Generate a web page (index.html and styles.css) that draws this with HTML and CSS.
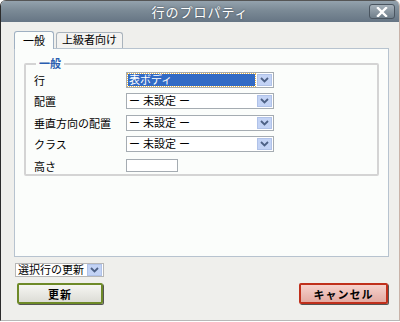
FILE: index.html
```html
<!DOCTYPE html>
<html lang="ja">
<head>
    <meta charset="UTF-8">
    <title>行のプロパティ</title>
    <link rel="stylesheet" href="styles.css">
</head>
<body>
    <div class="dialog">
        <div class="titlebar">
            <span class="title">行のプロパティ</span>
            <span class="close">
                <svg width="12" height="10" viewBox="0 0 12 10"><path d="M2 1 L10 9 M10 1 L2 9" stroke="#fff" stroke-width="2.4" stroke-linecap="square"/></svg>
            </span>
        </div>

        <div class="body">
            <div class="tabs">
                <span class="tab active">一般</span>
                <span class="tab">上級者向け</span>
            </div>

            <div class="panel">
                <fieldset class="group">
                    <legend>一般</legend>

                    <div class="row">
                        <label>行</label>
                        <div class="select focus">
                            <span class="value"><span class="hl">表ボディ</span></span>
                            <span class="arrow"><svg width="9" height="6" viewBox="0 0 9 6"><path d="M1 1 L4.5 4.5 L8 1" fill="none" stroke="#4d6185" stroke-width="1.8"/></svg></span>
                        </div>
                    </div>
                    <div class="row">
                        <label>配置</label>
                        <div class="select">
                            <span class="value">ー 未設定 ー</span>
                            <span class="arrow"><svg width="9" height="6" viewBox="0 0 9 6"><path d="M1 1 L4.5 4.5 L8 1" fill="none" stroke="#4d6185" stroke-width="1.8"/></svg></span>
                        </div>
                    </div>
                    <div class="row">
                        <label>垂直方向の配置</label>
                        <div class="select">
                            <span class="value">ー 未設定 ー</span>
                            <span class="arrow"><svg width="9" height="6" viewBox="0 0 9 6"><path d="M1 1 L4.5 4.5 L8 1" fill="none" stroke="#4d6185" stroke-width="1.8"/></svg></span>
                        </div>
                    </div>
                    <div class="row">
                        <label>クラス</label>
                        <div class="select">
                            <span class="value">ー 未設定 ー</span>
                            <span class="arrow"><svg width="9" height="6" viewBox="0 0 9 6"><path d="M1 1 L4.5 4.5 L8 1" fill="none" stroke="#4d6185" stroke-width="1.8"/></svg></span>
                        </div>
                    </div>
                    <div class="row">
                        <label>高さ</label>
                        <div class="input"></div>
                    </div>
                </fieldset>
            </div>

            <div class="footer">
                <div class="select small">
                    <span class="value">選択行の更新</span>
                    <span class="arrow"><svg width="9" height="6" viewBox="0 0 9 6"><path d="M1 1 L4.5 4.5 L8 1" fill="none" stroke="#4d6185" stroke-width="1.8"/></svg></span>
                </div>
                <div class="buttons">
                    <span class="btn ok">更新</span>
                    <span class="btn cancel">キャンセル</span>
                </div>
            </div>
        </div>
    </div>
</body>
</html>
```

FILE: styles.css
```css
body {
    margin: 0;
    background: #ffffff;
    font-family: "Liberation Sans", "Noto Sans CJK JP", sans-serif;
    font-size: 11px;
    color: #000;
}

.dialog {
    width: 398px;
    height: 320px;
    border-left: 1px solid #2c2c2c;
    border-right: 1px solid #c9b2a8;
    border-bottom: 1px solid #b8b8b8;
    border-radius: 6px 6px 0 0;
    overflow: hidden;
    background: #efefec;
    display: flex;
    flex-direction: column;
}

.titlebar {
    height: 22px;
    background: linear-gradient(#94a2ad, #7b8a96 45%, #667584);
    border-top: 1px solid #555;
    box-sizing: border-box;
    display: flex;
    align-items: center;
    justify-content: center;
    position: relative;
}

.title {
    color: #fff;
    font-size: 13px;
    letter-spacing: 1px;
    text-shadow: 0 0 2px #3a4650;
}

.close {
    position: absolute;
    right: 4px;
    top: 3px;
    width: 26px;
    height: 15px;
    border: 1px solid #4a5560;
    border-radius: 3px;
    background: linear-gradient(#a6b1ba, #6f7e8a);
    display: flex;
    align-items: center;
    justify-content: center;
    box-sizing: border-box;
}

.body {
    flex: 1;
    padding: 9px 10px 0 13px;
    display: flex;
    flex-direction: column;
}

.tabs {
    display: flex;
    align-items: flex-end;
    gap: 2px;
    height: 17px;
}

.tab {
    height: 15px;
    padding: 0 5px;
    border: 1px solid #a9b3bc;
    border-bottom: none;
    border-radius: 3px 3px 0 0;
    background: #f3f3f1;
    line-height: 15px;
    font-size: 11px;
}

.tab.active {
    height: 17px;
    padding: 0 8px;
    background: #fbfdfb;
    position: relative;
    top: 1px;
    border-color: #9fb0c2;
    line-height: 19px;
}

.panel {
    height: 209px;
    border: 1px solid #b7c3cf;
    background: #fbfdfb;
    padding: 10px 9px 0 9px;
    box-sizing: border-box;
}

.group {
    margin: 0;
    padding: 0 8px 6px 8px;
    border: 2px solid #d4d4d4;
    border-radius: 2px;
    height: 117px;
    box-sizing: border-box;
}

.group legend {
    color: #2a5db0;
    font-weight: bold;
    padding: 0 3px;
    margin-left: 2px;
    line-height: 10px;
}

.row {
    display: flex;
    align-items: center;
    height: 21.5px;
}

.row label {
    width: 92px;
}

.select {
    width: 148px;
    height: 16px;
    border: 1px solid #a5acb2;
    background: #fff;
    display: flex;
    align-items: center;
    box-sizing: border-box;
    padding: 1px;
}

.select .value {
    flex: 1;
    padding-left: 1px;
    line-height: 12px;
    white-space: nowrap;
}

.select.focus .value {
    height: 12px;
    margin-right: 2px;
    background: #316ac5;
    outline: 1px dotted #e8b44a;
    padding-left: 1px;
}

.hl {
    color: #fff;
}

.arrow {
    width: 15px;
    height: 12px;
    background: #c3d3f5;
    border: 1px solid #b0c2e8;
    box-sizing: border-box;
    display: flex;
    align-items: center;
    justify-content: center;
}

.input {
    width: 52px;
    height: 13px;
    border: 1px solid #a5acb2;
    background: #fff;
    box-sizing: border-box;
}

.footer {
    padding: 6px 0 0 1px;
}

.select.small {
    width: 89px;
    height: 14px;
    border-color: #b7b7b7;
}

.buttons {
    display: flex;
    justify-content: space-between;
    margin-top: 6px;
    padding: 0 1px 0 2px;
}

.btn {
    height: 21px;
    box-sizing: border-box;
    font-weight: bold;
    display: flex;
    align-items: center;
    justify-content: center;
    border-radius: 2px;
    letter-spacing: 1px;
}

.btn.ok {
    width: 86px;
    border: 2px solid #6e8a28;
    background: linear-gradient(#f6f6f2, #dcdcd6);
    box-shadow: 1px 1px 0 #555;
}

.btn.cancel {
    width: 89px;
    border: 2px solid #c0301c;
    background: linear-gradient(#f6d2cc, #e3aaa2);
    box-shadow: 1px 1px 0 #555;
}
```
